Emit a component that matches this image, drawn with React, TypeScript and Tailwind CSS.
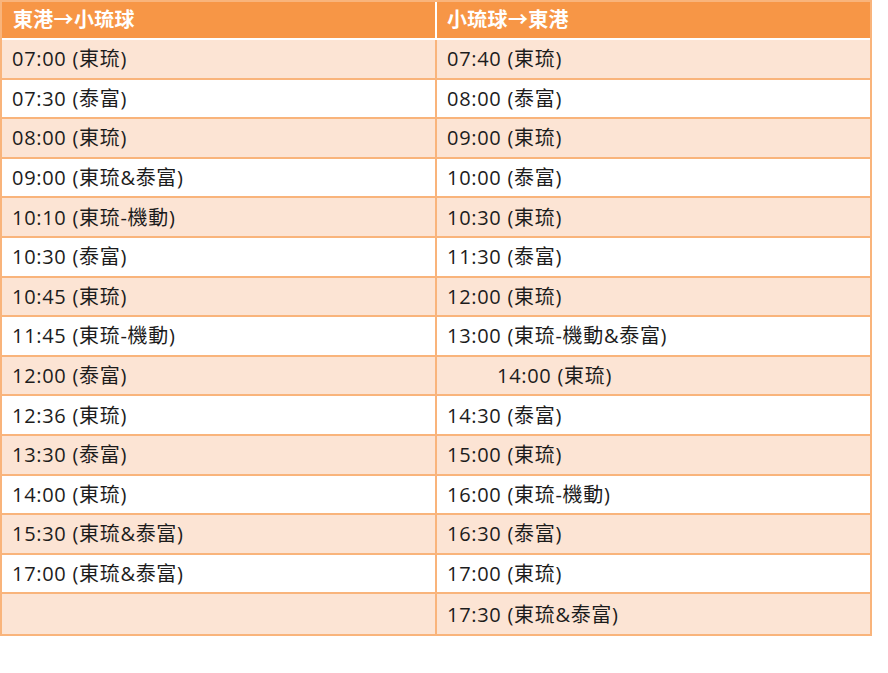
import React from 'react';

const rows: [string, string, boolean?][] = [
  ['07:00 (東琉)', '07:40 (東琉)'],
  ['07:30 (泰富)', '08:00 (泰富)'],
  ['08:00 (東琉)', '09:00 (東琉)'],
  ['09:00 (東琉&泰富)', '10:00 (泰富)'],
  ['10:10 (東琉-機動)', '10:30 (東琉)'],
  ['10:30 (泰富)', '11:30 (泰富)'],
  ['10:45 (東琉)', '12:00 (東琉)'],
  ['11:45 (東琉-機動)', '13:00 (東琉-機動&泰富)'],
  ['12:00 (泰富)', '14:00 (東琉)', true],
  ['12:36 (東琉)', '14:30 (泰富)'],
  ['13:30 (泰富)', '15:00 (東琉)'],
  ['14:00 (東琉)', '16:00 (東琉-機動)'],
  ['15:30 (東琉&泰富)', '16:30 (泰富)'],
  ['17:00 (東琉&泰富)', '17:00 (東琉)'],
  ['', '17:30 (東琉&泰富)'],
];

const App = () => {
  return (
    <div
      className="w-[888px] h-[673px] bg-white"
      style={{ fontFamily: '"Open Sans", "Noto Sans CJK TC", sans-serif' }}
    >
      <div className="w-[872px] border-2 border-[#F9B47B]">
        {/* Header */}
        <div className="flex h-[38px] bg-[#F79646] border-b-2 border-white text-white text-[20px] font-semibold tracking-[0.3px]">
          <div className="w-[435px] border-r-2 border-white flex items-center pl-[11px]">東港→小琉球</div>
          <div className="flex-1 flex items-center pl-[10px]">小琉球→東港</div>
        </div>

        {/* Body */}
        {rows.map(([left, right, indent], i) => (
          <div
            key={i}
            className={`flex h-[39.6px] text-[20px] tracking-[0.7px] text-[#1c1c1c] ${
              i < rows.length - 1 ? 'border-b-2 border-[#F9B47B]' : ''
            } ${i % 2 === 0 ? 'bg-[#FCE4D4]' : 'bg-white'}`}
          >
            <div className="w-[435px] border-r-2 border-[#F9B47B] flex items-center pl-[10px] pt-[1px]">{left}</div>
            <div className={`flex-1 flex items-center pt-[1px] ${indent ? 'pl-[60px]' : 'pl-[10px]'}`}>{right}</div>
          </div>
        ))}
      </div>
    </div>
  );
};

export default App;
